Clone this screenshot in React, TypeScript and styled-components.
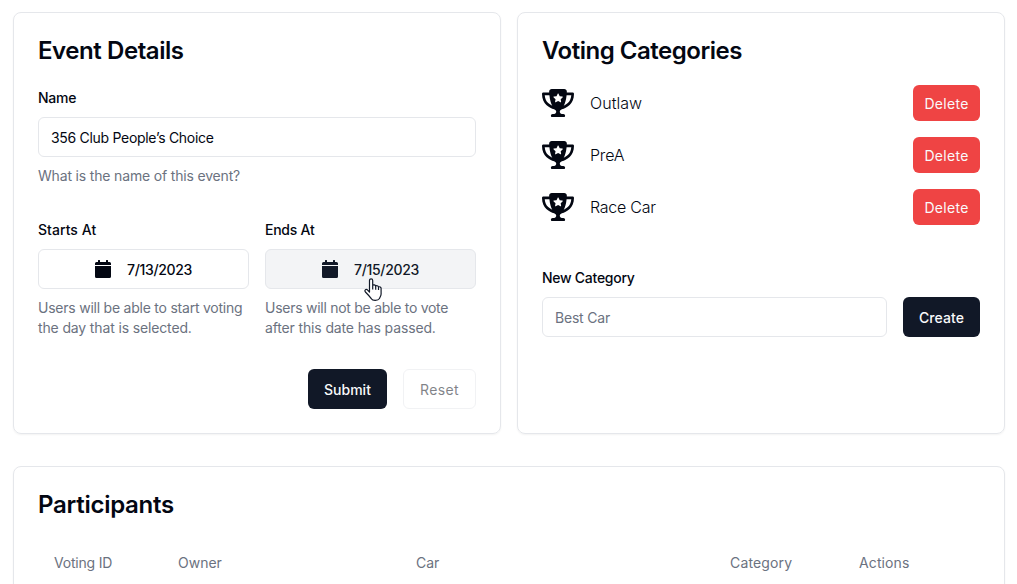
import React from "react";
import styled, { createGlobalStyle } from "styled-components";

const GlobalStyle = createGlobalStyle`
  *, *::before, *::after { box-sizing: border-box; }
  body {
    margin: 0;
    background: #fff;
    color: #030712;
    font-family: Inter, "Liberation Sans", sans-serif;
    font-size: 14px;
    font-weight: 400;
    line-height: 20px;
    overflow: hidden;
  }
  button, input { font: inherit; color: inherit; }
`;

const Page = styled.main`
  display: flex;
  flex-direction: column;
  gap: 32px;
  width: 1017px;
  height: 584px;
  padding: 12px 12px 0 13px;
  overflow: hidden;
`;

const TopRow = styled.div`
  display: grid;
  grid-template-columns: 1fr 1fr;
  gap: 16px;
`;

const Card = styled.section<{ $height?: number }>`
  display: flex;
  flex-direction: column;
  flex-shrink: 0;
  height: ${(p) => p.$height ?? 422}px;
  padding: 24px;
  border: 1px solid #e5e7eb;
  border-radius: 8px;
  box-shadow: 0 1px 2px rgba(0, 0, 0, 0.05);
`;

const Text = styled.span<{ $spacing?: number }>`
  letter-spacing: ${(p) => p.$spacing ?? 0}px;
  white-space: nowrap;
`;

const Title = styled.h2<{ $spacing: number }>`
  margin: -2px 0 0;
  font-size: 24px;
  font-weight: 600;
  line-height: 32px;
  letter-spacing: ${(p) => p.$spacing}px;
`;

const Label = styled.label<{ $spacing?: number }>`
  display: block;
  height: 20px;
  font-weight: 500;
  letter-spacing: ${(p) => p.$spacing ?? 0}px;
`;

const Field = styled.div<{ $top: number }>`
  margin-top: ${(p) => p.$top}px;
`;

const Input = styled.input<{ $spacing: number }>`
  display: block;
  width: 100%;
  height: 40px;
  margin-top: 9px;
  padding: 1px 12px 0;
  border: 1px solid #e5e7eb;
  border-radius: 6px;
  background: #fff;
  letter-spacing: ${(p) => p.$spacing}px;
  &::placeholder { color: #6b7280; opacity: 1; }
`;

const Hint = styled.p`
  display: flex;
  flex-direction: column;
  margin: 9px 0 0;
  color: #6b7280;
`;

const DateRow = styled.div`
  display: grid;
  grid-template-columns: 1fr 1fr;
  gap: 16px;
  margin-top: 34px;
`;

const DateButton = styled.button<{ $hovered?: boolean }>`
  display: flex;
  align-items: center;
  gap: 16px;
  width: 100%;
  height: 40px;
  margin-top: 9px;
  padding: 0 0 0 56px;
  border: 1px solid #e5e7eb;
  border-radius: 6px;
  background: ${(p) => (p.$hovered ? "#f3f4f6" : "#fff")};
  color: ${(p) => (p.$hovered ? "#111827" : "#030712")};
  font-weight: 500;
  position: relative;
  svg { flex-shrink: 0; }
  span { padding-top: 1px; }
`;

const Pointer = styled.svg`
  position: absolute;
  left: 98px;
  top: 28px;
`;

const FormActions = styled.div`
  display: flex;
  justify-content: flex-end;
  gap: 16px;
  margin-top: 31px;
`;

const Button = styled.button<{ $kind: "primary" | "outline" | "danger"; $width: number }>`
  flex-shrink: 0;
  width: ${(p) => p.$width}px;
  height: ${(p) => (p.$kind === "danger" ? 36 : 40)}px;
  padding: 2px 0 0;
  border: ${(p) => (p.$kind === "outline" ? "1px solid #e5e7eb" : "0")};
  border-radius: 6px;
  background: ${(p) => ({ primary: "#111827", outline: "#fff", danger: "#ef4444" })[p.$kind]};
  color: ${(p) => (p.$kind === "outline" ? "#030712" : "#f9fafb")};
  opacity: ${(p) => (p.$kind === "outline" ? 0.5 : 1)};
  font-weight: ${(p) => (p.$kind === "primary" ? 500 : 400)};
`;

const CategoryList = styled.ul`
  display: flex;
  flex-direction: column;
  gap: 16px;
  margin: 18px 0 0;
  padding: 0;
  list-style: none;
`;

const CategoryRow = styled.li`
  display: flex;
  align-items: center;
  gap: 16px;
  height: 36px;
`;

const CategoryName = styled(Text)`
  flex: 1;
  font-size: 16px;
  font-weight: 300;
  line-height: 24px;
`;

const CreateRow = styled.div`
  display: flex;
  align-items: flex-end;
  gap: 16px;
  margin-top: 43px;
`;

const CreateField = styled.div`
  flex: 1;
`;

const HeaderRow = styled.div`
  display: grid;
  grid-template-columns: 124px 238px 314px 129px 1fr;
  margin-top: 32px;
  padding-left: 16px;
  color: #6b7280;
`;

const Trophy = () => (
  <svg width="32" height="28.44" viewBox="0 0 576 512" fill="currentColor">
    <path d="M400 0H176c-26.5 0-48.1 21.8-47.1 48.2.2 5.3.4 10.6.7 15.8H24C10.7 64 0 74.7 0 88c0 92.6 33.5 157 78.5 200.7 44.3 43.1 98.3 64.8 138.1 75.8 23.4 6.5 39.4 26 39.4 45.6 0 20.9-17 37.9-37.9 37.9H192c-17.7 0-32 14.3-32 32s14.3 32 32 32h192c17.7 0 32-14.3 32-32s-14.3-32-32-32h-26.1c-20.9 0-37.9-17-37.9-37.9 0-19.6 15.9-39.2 39.4-45.6 39.9-11 93.9-32.7 138.2-75.8C542.5 245 576 180.6 576 88c0-13.3-10.7-24-24-24H446.4c.3-5.2.5-10.4.7-15.8C448.1 21.8 426.5 0 400 0zM48.9 112h84.4c9.1 90.1 29.2 150.3 51.9 190.6-24.9-11-50.8-26.5-73.2-48.3-32-31.1-58-76-63.1-142.3zm415.2 142.3c-22.4 21.8-48.3 37.3-73.2 48.3 22.7-40.3 42.8-100.5 51.9-190.6h84.4c-5.1 66.3-31.1 111.2-63.1 142.3z" />
    <path fill="#fff" transform="translate(288 164) scale(.88) translate(-286 -172)" d="M297 84l24 49 54 8c8 1 11 11 5 16l-39 38 9 54c1 7-6 13-13 9l-49-25-48 25c-7 4-15-2-14-9l10-54-39-38c-6-5-3-15 5-16l54-8 24-49c4-7 14-7 17 0z" />
  </svg>
);

const CalendarIcon = () => (
  <svg width="16" height="18" viewBox="0 0 16 18" fill="currentColor">
    <path d="M3 .5Q3 0 3.500 0h1Q5 0 5 .5V2h6V.5q0-.5.5-.5h1q.5 0 .5.500V2h1.500Q16 2 16 3.500V5H0V3.500Q0 2 1.500 2H3zM0 6h16v10.500q0 1.500-1.500 1.500h-13Q0 18 0 16.500z" />
  </svg>
);

const HandCursor = () => (
  <Pointer width="19" height="24" viewBox="0 0 19 24" fill="#fff" stroke="#111827" strokeWidth="1.2" strokeLinejoin="round">
    <path d="M5.500 14V2.500C5.500.2 8.700.2 8.700 2.500V7.300c.8-.8 2.600-.6 2.900.7.9-.7 2.500-.3 2.800.9 1.300-.5 2.700.2 2.700 1.700V16c0 2.100-1.400 3.200-1.600 4.500-1.600 2.400-6.800 2.500-8.200.2C5.800 18.500 3.900 16.500 1.400 14c-1.300-1.700.4-3.200 2-2.200zM8.700 7.500v4M11.700 8.300v3.500M14.500 9.200V12" />
  </Pointer>
);

const categories = [
  { name: "Outlaw", spacing: 0.05 },
  { name: "PreA", spacing: -0.2 },
  { name: "Race Car", spacing: -0.25 },
];

const columns = [
  { name: "Voting ID", spacing: -0.2 },
  { name: "Owner", spacing: 0 },
  { name: "Car", spacing: 0 },
  { name: "Category", spacing: 0.15 },
  { name: "Actions", spacing: 0.12 },
];

export default function App() {
  return (
    <>
      <GlobalStyle />
      <Page>
        <TopRow>
          <Card>
            <Title $spacing={-0.43}>Event Details</Title>
            <Field $top={21}>
              <Label $spacing={-0.25}>Name</Label>
              <Input $spacing={-0.3} defaultValue="356 Club People’s Choice" />
              <Hint><Text $spacing={-0.17}>What is the name of this event?</Text></Hint>
            </Field>
            <DateRow>
              <div>
                <Label $spacing={0.05}>Starts At</Label>
                <DateButton><CalendarIcon /><Text $spacing={-0.33}>7/13/2023</Text></DateButton>
                <Hint>
                  <Text $spacing={-0.23}>Users will be able to start voting</Text>
                  <Text $spacing={-0.14}>the day that is selected.</Text>
                </Hint>
              </div>
              <div>
                <Label $spacing={-0.25}>Ends At</Label>
                <DateButton $hovered><CalendarIcon /><Text $spacing={-0.33}>7/15/2023</Text><HandCursor /></DateButton>
                <Hint>
                  <Text $spacing={-0.27}>Users will not be able to vote</Text>
                  <Text $spacing={-0.14}>after this date has passed.</Text>
                </Hint>
              </div>
            </DateRow>
            <FormActions>
              <Button $kind="primary" $width={79}><Text $spacing={0}>Submit</Text></Button>
              <Button $kind="outline" $width={73}><Text $spacing={0.4}>Reset</Text></Button>
            </FormActions>
          </Card>
          <Card>
            <Title $spacing={-0.48}>Voting Categories</Title>
            <CategoryList>
              {categories.map((c) => (
                <CategoryRow key={c.name}>
                  <Trophy />
                  <CategoryName $spacing={c.spacing}>{c.name}</CategoryName>
                  <Button $kind="danger" $width={67}><Text $spacing={0.3}>Delete</Text></Button>
                </CategoryRow>
              ))}
            </CategoryList>
            <CreateRow>
              <CreateField>
                <Label $spacing={-0.27}>New Category</Label>
                <Input $spacing={-0.2} placeholder="Best Car" />
              </CreateField>
              <Button $kind="primary" $width={77}><Text $spacing={0.1}>Create</Text></Button>
            </CreateRow>
          </Card>
        </TopRow>
        <Card $height={240}>
          <Title $spacing={-0.27}>Participants</Title>
          <HeaderRow>
            {columns.map((c) => <Text key={c.name} $spacing={c.spacing}>{c.name}</Text>)}
          </HeaderRow>
        </Card>
      </Page>
    </>
  );
}
